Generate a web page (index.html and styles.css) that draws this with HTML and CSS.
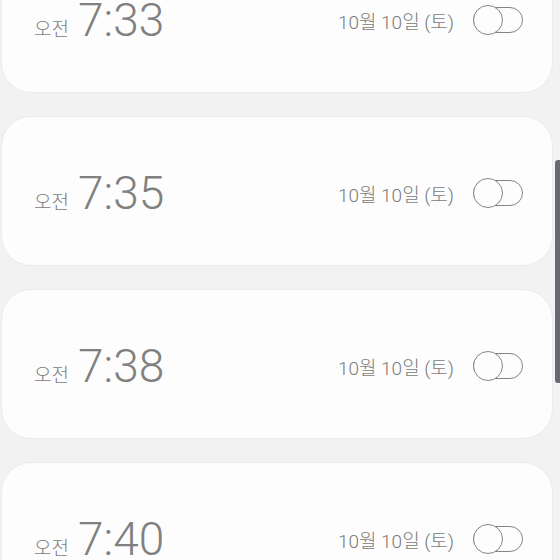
FILE: index.html
```html
<!DOCTYPE html>
<html lang="ko">
<head>
  <meta charset="UTF-8">
  <title>알람</title>
  <link rel="stylesheet" href="styles.css">
</head>
<body>

  <div class="alarm-list">
    <div class="alarm">
      <div class="time"><span class="ampm">오전</span><span class="clock">7:33</span></div>
      <div class="right">
        <span class="date">10월 10일 (토)</span>
        <span class="toggle"><span class="knob"></span></span>
      </div>
    </div>
    <div class="alarm">
      <div class="time"><span class="ampm">오전</span><span class="clock">7:35</span></div>
      <div class="right">
        <span class="date">10월 10일 (토)</span>
        <span class="toggle"><span class="knob"></span></span>
      </div>
    </div>
    <div class="alarm">
      <div class="time"><span class="ampm">오전</span><span class="clock">7:38</span></div>
      <div class="right">
        <span class="date">10월 10일 (토)</span>
        <span class="toggle"><span class="knob"></span></span>
      </div>
    </div>
    <div class="alarm">
      <div class="time"><span class="ampm">오전</span><span class="clock">7:40</span></div>
      <div class="right">
        <span class="date">10월 10일 (토)</span>
        <span class="toggle"><span class="knob"></span></span>
      </div>
    </div>
  </div>

  <div class="scrollbar"></div>

</body>
</html>
```

FILE: styles.css
```css
body {
  margin: 0;
  background-color: #f2f2f2;
  font-family: Roboto, "Noto Sans CJK KR", sans-serif;
  color: #7b7b7b;
  overflow: hidden;
}
.alarm-list {
  margin-top: -57px;
  padding-left: 1px;
  width: 552px;
}
.alarm {
  height: 150px;
  box-sizing: border-box;
  margin-bottom: 23px;
  background-color: #fdfdfd;
  border: 1px solid #ebebeb;
  border-radius: 30px;
  display: flex;
  align-items: center;
  justify-content: space-between;
  padding: 4px 29px 0 32px;
}
.time {
  display: flex;
  align-items: baseline;
  gap: 9px;
}
.ampm {
  font-family: "Noto Sans CJK KR", sans-serif;
  font-size: 19px;
  font-weight: 300;
}
.clock {
  font-size: 46px;
  font-weight: 300;
  color: #808080;
}
.right {
  display: flex;
  align-items: center;
  gap: 19px;
}
.date {
  font-size: 19px;
  font-weight: 300;
  color: #7a7a7a;
}
.toggle {
  position: relative;
  width: 50px;
  height: 26px;
  box-sizing: border-box;
  border: 1.5px solid #858585;
  border-radius: 13px;
}
.knob {
  position: absolute;
  left: -1.5px;
  top: -3.5px;
  width: 30px;
  height: 30px;
  box-sizing: border-box;
  border: 1.5px solid #858585;
  border-radius: 50%;
  background-color: #fdfdfd;
}
.scrollbar {
  position: fixed;
  left: 555px;
  top: 160px;
  width: 6px;
  height: 223px;
  background-color: #6b6874;
  border-radius: 3px 0 0 3px;
}
```
